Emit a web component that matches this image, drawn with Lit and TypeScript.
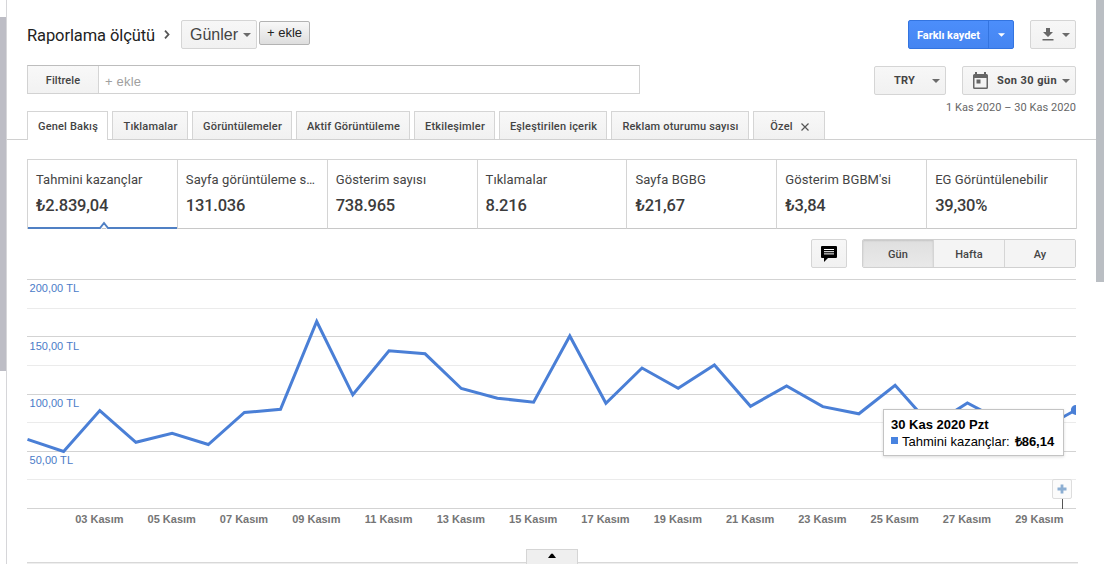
import { LitElement, html, svg, css } from "lit";
import { customElement, property } from "lit/decorators.js";
import { classMap } from "lit/directives/class-map.js";

const TABS = [
  { label: "Genel Bakış", width: 81 },
  { label: "Tıklamalar", width: 76 },
  { label: "Görüntülemeler", width: 100 },
  { label: "Aktif Görüntüleme", width: 114 },
  { label: "Etkileşimler", width: 81 },
  { label: "Eşleştirilen içerik", width: 108 },
  { label: "Reklam oturumu sayısı", width: 138 },
  { label: "Özel", width: 72, closable: true },
];

const METRICS = [
  ["Tahmini kazançlar", "₺2.839,04"],
  ["Sayfa görüntüleme s…", "131.036"],
  ["Gösterim sayısı", "738.965"],
  ["Tıklamalar", "8.216"],
  ["Sayfa BGBG", "₺21,67"],
  ["Gösterim BGBM'si", "₺3,84"],
  ["EG Görüntülenebilir", "39,30%"],
];

/* Vertical position of each day's value inside the plot, in plot units. */
const POINTS = [
  160.3, 172.5, 131.5, 163.3, 154.3, 165.5, 133.5, 130.3, 42.5, 115.8,
  71.7, 74.8, 109.5, 119.2, 123.2, 57, 124.3, 89, 109.2, 86,
  127.3, 107, 127.6, 134.8, 106.2, 147, 124, 143, 151, 131,
];
const STEP = 36.15;
const DAYS = ["03", "05", "07", "09", "11", "13", "15", "17", "19", "21", "23", "25", "27", "29"];

const caret = html`<svg class="caret" width="8" height="4" viewBox="0 0 8 4"><path d="M0 0h8L4 4z" fill="currentColor"/></svg>`;

@customElement("metric-card")
class MetricCard extends LitElement {
  @property() label = "";
  @property() value = "";
  @property({ type: Boolean, reflect: true }) active = false;

  static styles = css`
    :host { display: block; box-sizing: border-box; min-width: 0; height: 70px; padding: 12px 8px 0 8px;
      border-left: 1px solid #d4d4d4; border-bottom: 1px solid #c8c8c8; position: relative; color: #444; }
    .label { font-size: 13px; line-height: 16px; letter-spacing: .08px; white-space: nowrap; }
    .value { font-size: 16.5px; line-height: 20px; margin-top: 8px; font-weight: 500; color: #3c3c3c; white-space: nowrap; letter-spacing: -.22px; }
    .marker { position: absolute; left: 0; bottom: -1px; display: block; }
  `;

  render() {
    return html`
      <div class="label">${this.label}</div>
      <div class="value">${this.value}</div>
      ${this.active
        ? html`<svg class="marker" width="149" height="9" viewBox="0 0 149 9" fill="none">
            <path d="M0 8H71.5L76 3L80.5 8H149" stroke="#fff" stroke-width="4"/>
            <path d="M0 8H72L76 3L80 8H149" stroke="#5080c4" stroke-width="2"/>
          </svg>`
        : null}
    `;
  }
}

@customElement("earnings-chart")
class EarningsChart extends LitElement {
  static styles = css`
    :host { display: block; width: 1050px; position: relative; }
    svg { display: block; }
    .axis { font: 11px "Liberation Sans", Arial, sans-serif; fill: #4a7bc8; }
    .day { font: bold 11px "Liberation Sans", Arial, sans-serif; fill: #757575; text-anchor: middle; }
    .tip { position: absolute; left: 856px; top: 130px; width: 181px; height: 47px; box-sizing: border-box;
      border: 1px solid #c4c4c4; background: #fff; box-shadow: 0 1px 3px rgba(0,0,0,.14); padding: 6px 0 0 7px;
      font: 13px/17px "Liberation Sans", Arial, sans-serif; color: #000; white-space: nowrap; }
    .tip-date { font-weight: bold; letter-spacing: 0; }
    .tip-row { display: flex; align-items: center; }
    .swatch { width: 7px; height: 7px; background: #4883e0; margin: 0 4px 2px 0; }
    .amount { font-weight: bold; margin-left: 5px; }
    .note { position: absolute; left: 1025px; top: 200px; width: 20px; height: 20px; box-sizing: border-box;
      border: 1px solid #ddd; border-radius: 2px; background: #fbfbfb; display: grid; place-items: center; }
  `;

  render() {
    const line = POINTS.map((y, i) => `${(0.5 + i * STEP).toFixed(1)},${y}`).join(" ");
    const rows = [0.5, 29.5, 57.5, 86.5, 115.5, 143.5, 172.5, 200.5, 229.5];
    return html`
      <svg width="1050" height="250" viewBox="0 0 1050 250">
        ${rows.map((y, i) => svg`<path d="M0 ${y}H1049" stroke=${i % 2 ? "#ebebeb" : "#d3d3d3"} />`)}
        <text class="axis" x="2.5" y="13" textLength="49.5">200,00 TL</text>
        <text class="axis" x="2.5" y="71" textLength="49.5">150,00 TL</text>
        <text class="axis" x="2.5" y="128" textLength="49.5">100,00 TL</text>
        <text class="axis" x="2.5" y="185" textLength="43.5">50,00 TL</text>
        <path d="M1035.5 219V230" stroke="#555"/>
        <svg width="1049" height="230"><polyline points=${line} fill="none" stroke="#4a7fd6" stroke-width="3" stroke-miterlimit="10"/>
        <circle cx="1048.9" cy="131" r="5" fill="#4a7fd6"/></svg>
        ${DAYS.map((d, i) => svg`<text class="day" x=${72.4 + i * STEP * 2} y="244">${d} Kasım</text>`)}
      </svg>
      <div class="tip">
        <div class="tip-date">30 Kas 2020 Pzt</div>
        <div class="tip-row"><span class="swatch"></span>Tahmini kazançlar:<span class="amount">₺86,14</span></div>
      </div>
      <div class="note"><svg width="10" height="10" viewBox="0 0 10 10"><path d="M5 .5V9.5M.5 5H9.5" stroke="#8caed2" stroke-width="2.8"/></svg></div>
    `;
  }
}

@customElement("app-root")
class AppRoot extends LitElement {
  static styles = css`
    :host { display: flex; width: 1104px; height: 564px; overflow: hidden; background: #fff;
      font-family: Roboto, "Liberation Sans", sans-serif; color: #444; }
    * { box-sizing: border-box; }
    svg { display: block; flex: none; }
    .rail { width: 7px; flex: none; border-right: 1px solid #d6d6d9; padding-top: 17px; }
    .rail-thumb { height: 354px; background: #bdbdc5; }
    .scroll { width: 8px; flex: none; }
    .scroll-thumb { height: 282px; background: #babec3; }
    main { width: 1089px; flex: none; display: flex; flex-direction: column; }
    .top { height: 111px; display: flex; justify-content: space-between; padding: 20px 20px 0 20px; }
    .left { width: 613px; }
    .crumbs { display: flex; align-items: flex-start; height: 45px; }
    .title { font-size: 16.5px; line-height: 31px; letter-spacing: -.1px; color: #222; width: 128px; white-space: nowrap; }
    .chev { margin: 10px 0 0 9px; }
    .btn { border: 1px solid #d5d5d5; border-radius: 2px; background: linear-gradient(#f7f7f7, #f1f1f1);
      height: 29px; display: flex; align-items: center; white-space: nowrap; }
    .caret { color: #6b6b6b; }
    .dim { width: 76px; margin-left: 11px; padding: 0 5px 0 8px; justify-content: space-between;
      font: 16px "Liberation Sans", Arial, sans-serif; color: #444; }
    .dim .caret { margin-top: 1px; }
    .add { width: 51px; height: 24px; margin: 1px 0 0 2px; border: 1px solid #b3b3b3; border-radius: 2px; justify-content: center;
      background: linear-gradient(#f8f8f8, #dedede); font: 13px "Liberation Sans", Arial, sans-serif; color: #222; display: flex; align-items: center; padding-bottom: 2px; }
    .filter { display: flex; height: 29px; border: 1px solid #d2d2d2; border-top-color: #bdbdbd; }
    .filter-label { width: 71px; border-right: 1px solid #d5d5d5; background: linear-gradient(#f8f8f8, #f2f2f2); padding-top: 2px;
      display: flex; align-items: center; justify-content: center; font-size: 11px; font-weight: 500; letter-spacing: .1px; }
    .filter-input { font: 13px/32px "Liberation Sans", Arial, sans-serif; color: #a0a0a0; padding-left: 6px; letter-spacing: .2px; }
    .actions { display: flex; flex-direction: column; align-items: flex-end; }
    .line { display: flex; gap: 16px; }
    .line + .line { margin-top: 17px; }
    .save { display: flex; width: 106px; height: 29px; border: 1px solid #3374e0; border-radius: 2px; background: linear-gradient(#4c8efb, #4585f1);
      color: #fff; font-size: 11px; font-weight: 700; }
    .save-text { width: 80px; border-right: 1px solid #3374e0; display: flex; align-items: center; justify-content: center; white-space: nowrap; letter-spacing: -.03px; padding-top: 2px; }
    .save-more { flex: 1; display: grid; place-items: center; }
    .save .caret { color: #fff; width: 7px; }
    .download { width: 46px; padding: 0 5px 0 11px; justify-content: space-between; }
    .cur { width: 72px; padding: 0 5px 0 19px; justify-content: space-between; font: bold 11px Roboto, sans-serif; letter-spacing: .2px; }
    .range { width: 114px; padding: 0 5px 0 10px; justify-content: space-between; font: bold 11px Roboto, sans-serif; letter-spacing: .42px; }
    .range-text { margin-left: 4px; }
    .dates { font-size: 11px; line-height: 14px; margin-top: 6px; color: #666; letter-spacing: .05px; white-space: nowrap; }
    .tabs { height: 29px; display: flex; gap: 4px; padding-left: 20px; border-bottom: 1px solid #d0d0d0; flex: none; }
    .tab { height: 28px; border: 1px solid #d5d5d5; border-bottom: 0; background: linear-gradient(#f8f8f8, #f1f1f1);
      display: flex; align-items: center; justify-content: center; gap: 8px; padding: 2px 0 0 1px; font-size: 11px; font-weight: 500; letter-spacing: .18px; white-space: nowrap; }
    .tab.active { background: #fff; height: 29px; padding-bottom: 1px; }
    .cards { margin: 19px 0 0 20px; width: 1050px; display: grid; grid-template-columns: repeat(7, 1fr);
      border-top: 1px solid #d4d4d4; border-right: 1px solid #d4d4d4; height: 70px; flex: none; }
    .cards metric-card { height: 69px; }
    .tools { display: flex; justify-content: flex-end; gap: 15px; padding-right: 20px; margin-top: 10px; }
    .chat { width: 36px; justify-content: center; }
    .segments { display: flex; width: 214px; height: 29px; border: 1px solid #d0d0d0; border-radius: 2px; overflow: hidden; }
    .seg { flex: 1; display: grid; place-items: center; padding-top: 2px; font-size: 11px; font-weight: 500; letter-spacing: .1px; background: #f4f4f4; }
    .seg + .seg { border-left: 1px solid #d5d5d5; }
    .seg.on { background: linear-gradient(#dfdfdf, #e9e9e9); box-shadow: inset 0 1px 2px rgba(0,0,0,.12); }
    earnings-chart { margin: 11px 0 0 20px; flex: none; }
    .fold { margin: 20px 0 0 20px; width: 1051px; height: 15px; flex: none; display: flex; padding-left: 499px;
      background: linear-gradient(#d8d8d8, #d8d8d8) 0 13px / 100% 1px no-repeat, linear-gradient(#eee, #eee) 0 14px / 100% 1px no-repeat; }
    .handle { width: 52px; height: 15px; border: 1px solid #d5d5d5; border-bottom: 0; background: #efefef; display: flex; justify-content: center; padding-top: 3px; }
  `;

  render() {
    return html`
      <div class="rail"><div class="rail-thumb"></div></div>
      <main>
        <div class="top">
          <div class="left">
            <div class="crumbs">
              <span class="title">Raporlama ölçütü</span>
              <svg class="chev" width="6" height="9" viewBox="0 0 6 9" fill="none"><path d="M1 .7L4.5 4.5L1 8.3" stroke="#555" stroke-width="1.8"/></svg>
              <div class="btn dim">Günler${caret}</div>
              <div class="add">+ ekle</div>
            </div>
            <div class="filter"><div class="filter-label">Filtrele</div><div class="filter-input">+ ekle</div></div>
          </div>
          <div class="actions">
            <div class="line">
              <div class="save"><span class="save-text">Farklı kaydet</span><span class="save-more">${caret}</span></div>
              <div class="btn download">
                <svg width="12" height="13" viewBox="0 0 12 13"><path d="M4 0h4v4h3L6 9 1 4h3zM.5 11h11v1.5H.5z" fill="#686868"/></svg>${caret}
              </div>
            </div>
            <div class="line">
              <div class="btn cur">TRY${caret}</div>
              <div class="btn range">
                <svg width="15" height="17" viewBox="0 0 15 17"><path fill="#666" fill-rule="evenodd" d="M2 0h2v2h7V0h2v2h.5Q15 2 15 3.5v12Q15 17 13.500 17h-12Q0 17 0 15.500v-12Q0 2 1.500 2H2zM1.500 6v9.500h12V6zM3.500 7.500h4v4h-4z"/></svg>
                <span class="range-text">Son 30 gün</span>${caret}
              </div>
            </div>
            <div class="dates">1 Kas 2020 – 30 Kas 2020</div>
          </div>
        </div>
        <div class="tabs">
          ${TABS.map((t, i) => html`<div class=${classMap({ tab: true, active: i === 0 })} style="width:${t.width}px">${t.label}${
            t.closable ? html`<svg width="8" height="8" viewBox="0 0 8 8"><path d="M.5 .5L7.500 7.500M7.500 .5L.5 7.500" stroke="#555" stroke-width="1.200"/></svg>` : null}</div>`)}
        </div>
        <div class="cards">
          ${METRICS.map(([l, v], i) => html`<metric-card .label=${l} .value=${v} ?active=${i === 0}></metric-card>`)}
        </div>
        <div class="tools">
          <div class="btn chat">
            <svg width="16" height="16" viewBox="0 0 16 16"><path d="M1 0h14q1 0 1 1v10q0 1-1 1H7l-4 4v-4H1q-1 0-1-1V1q0-1 1-1z" fill="#000"/><path d="M3 3.500h10M3 5.700h10M3 7.900h10" stroke="#fff"/></svg>
          </div>
          <div class="segments"><div class="seg on">Gün</div><div class="seg">Hafta</div><div class="seg">Ay</div></div>
        </div>
        <earnings-chart></earnings-chart>
        <div class="fold"><div class="handle"><svg width="8" height="5" viewBox="0 0 8 5"><path d="M0 5L3 1Q4 0 5 1L8 5z" fill="#000"/></svg></div></div>
      </main>
      <div class="scroll"><div class="scroll-thumb"></div></div>
    `;
  }
}
